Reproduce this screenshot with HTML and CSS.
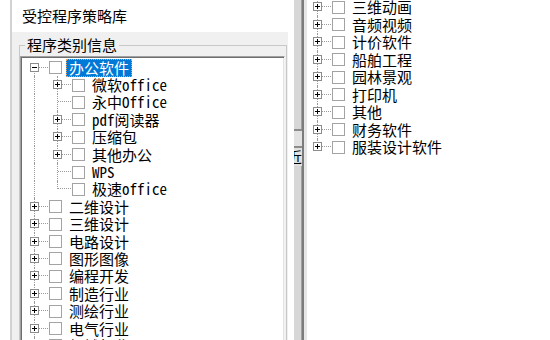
FILE: index.html
```html
<!DOCTYPE html>
<html lang="zh-CN">
<head>
<meta charset="utf-8">
<title>受控程序策略库</title>
<link rel="stylesheet" href="styles.css">
</head>
<body>
<div class="left">
  <div class="left-inner">
    <div class="title">受控程序策略库</div>
    <div class="group">
      <fieldset class="gbox">
        <legend>程序类别信息</legend>
        <div class="tree tree-left">
          <div class="row"><span class="exp first"><span class="box minus"></span></span><span class="chk"></span><span class="lbl sel">办公软件</span></div>
          <div class="row"><span class="ind v"></span><span class="exp"><span class="box plus"></span></span><span class="chk"></span><span class="lbl">微软office</span></div>
          <div class="row"><span class="ind v"></span><span class="exp"></span><span class="chk"></span><span class="lbl">永中Office</span></div>
          <div class="row"><span class="ind v"></span><span class="exp"><span class="box plus"></span></span><span class="chk"></span><span class="lbl">pdf阅读器</span></div>
          <div class="row"><span class="ind v"></span><span class="exp"><span class="box plus"></span></span><span class="chk"></span><span class="lbl">压缩包</span></div>
          <div class="row"><span class="ind v"></span><span class="exp"><span class="box plus"></span></span><span class="chk"></span><span class="lbl">其他办公</span></div>
          <div class="row"><span class="ind v"></span><span class="exp"></span><span class="chk"></span><span class="lbl">WPS</span></div>
          <div class="row"><span class="ind v"></span><span class="exp last"></span><span class="chk"></span><span class="lbl">极速office</span></div>
          <div class="row"><span class="exp"><span class="box plus"></span></span><span class="chk"></span><span class="lbl">二维设计</span></div>
          <div class="row"><span class="exp"><span class="box plus"></span></span><span class="chk"></span><span class="lbl">三维设计</span></div>
          <div class="row"><span class="exp"><span class="box plus"></span></span><span class="chk"></span><span class="lbl">电路设计</span></div>
          <div class="row"><span class="exp"><span class="box plus"></span></span><span class="chk"></span><span class="lbl">图形图像</span></div>
          <div class="row"><span class="exp"><span class="box plus"></span></span><span class="chk"></span><span class="lbl">编程开发</span></div>
          <div class="row"><span class="exp"><span class="box plus"></span></span><span class="chk"></span><span class="lbl">制造行业</span></div>
          <div class="row"><span class="exp"><span class="box plus"></span></span><span class="chk"></span><span class="lbl">测绘行业</span></div>
          <div class="row"><span class="exp"><span class="box plus"></span></span><span class="chk"></span><span class="lbl">电气行业</span></div>
          <div class="row"><span class="exp"><span class="box plus"></span></span><span class="chk"></span><span class="lbl">机械行业</span></div>
        </div>
      </fieldset>
    </div>
  </div>
</div>
<div class="splitter">
  <div class="split-btn"></div>
  <div class="split-text"><span>近</span></div>
</div>
<div class="right">
  <div class="tree tree-right">
    <div class="row"><span class="exp"><span class="box plus"></span></span><span class="chk"></span><span class="lbl">三维动画</span></div>
    <div class="row"><span class="exp"><span class="box plus"></span></span><span class="chk"></span><span class="lbl">音频视频</span></div>
    <div class="row"><span class="exp"><span class="box plus"></span></span><span class="chk"></span><span class="lbl">计价软件</span></div>
    <div class="row"><span class="exp"><span class="box plus"></span></span><span class="chk"></span><span class="lbl">船舶工程</span></div>
    <div class="row"><span class="exp"><span class="box plus"></span></span><span class="chk"></span><span class="lbl">园林景观</span></div>
    <div class="row"><span class="exp"><span class="box plus"></span></span><span class="chk"></span><span class="lbl">打印机</span></div>
    <div class="row"><span class="exp"><span class="box plus"></span></span><span class="chk"></span><span class="lbl">其他</span></div>
    <div class="row"><span class="exp"><span class="box plus"></span></span><span class="chk"></span><span class="lbl">财务软件</span></div>
    <div class="row"><span class="exp last"><span class="box plus"></span></span><span class="chk"></span><span class="lbl">服装设计软件</span></div>
  </div>
</div>
</body>
</html>
```

FILE: styles.css
```css
html, body {
  margin: 0;
  padding: 0;
}
body {
  width: 550px;
  height: 340px;
  overflow: hidden;
  display: flex;
  background: #ffffff;
  font-family: "Noto Sans Mono CJK SC", "Noto Sans CJK SC", sans-serif;
  font-size: 15px;
  color: #000;
}
.left {
  width: 288px;
  flex: none;
  padding-left: 10px;
  box-sizing: border-box;
  display: flex;
}
.left-inner {
  flex: 1;
  border-left: 2px solid #d2d2d2;
  display: flex;
  flex-direction: column;
  min-width: 0;
}
.title {
  height: 32px;
  box-sizing: border-box;
  padding: 7px 0 0 10px;
  line-height: 18px;
  background: #fff;
}
.group {
  flex: 1;
  background: #f0f0f0;
  padding: 5px 1px 0 7px;
  display: flex;
  min-height: 0;
}
.gbox {
  flex: 1;
  margin: 0;
  padding: 0;
  border: 1px solid #c8c8c8;
  border-bottom: none;
  min-width: 0;
  display: flex;
  flex-direction: column;
}
.gbox legend {
  margin-left: 5px;
  padding: 0 2px;
  line-height: 16px;
}
.tree-left {
  flex: 1;
  margin: 3px 1px 0 0;
  background: #fff;
  border-top: 1px solid #a0a0a0;
  border-left: 1px solid #a0a0a0;
  border-right: 1px solid #f4f4f4;
  box-shadow: inset 1px 1px 0 #6e6e6e, inset -1px 0 0 #e3e3e3;
  padding: 2px 0 0 1px;
  overflow: hidden;
}
.row {
  display: flex;
  align-items: center;
  height: 17.4px;
  white-space: nowrap;
}
.ind, .exp {
  position: relative;
  width: 23px;
  height: 100%;
  flex: none;
}
.ind.v::before,
.exp::before {
  content: "";
  position: absolute;
  left: 12px;
  top: 0;
  bottom: 0;
  border-left: 1px dotted #9a9a9a;
}
.exp.first::before { top: 50%; }
.exp.last::before { bottom: 50%; }
.exp::after {
  content: "";
  position: absolute;
  left: 13px;
  right: -3px;
  top: calc(50% - 1px);
  border-top: 1px dotted #9a9a9a;
}
.box {
  position: absolute;
  left: 8px;
  top: calc(50% - 5px);
  width: 9px;
  height: 9px;
  box-sizing: border-box;
  border: 1px solid #8c8c8c;
  background-color: #fff;
  z-index: 1;
}
.box.minus {
  background-image: linear-gradient(#000, #000);
  background-size: 5px 1px;
  background-position: center;
  background-repeat: no-repeat;
}
.box.plus {
  background-image: linear-gradient(#000, #000), linear-gradient(#000, #000);
  background-size: 5px 1px, 1px 5px;
  background-position: center, center;
  background-repeat: no-repeat;
}
.chk {
  flex: none;
  width: 13px;
  height: 13px;
  box-sizing: border-box;
  border: 1px solid #a3a3a3;
  background: #fff;
  margin-left: 4px;
}
.lbl {
  margin-left: 4px;
  padding: 0 2px;
  border: 1px solid transparent;
  line-height: 16px;
}
.lbl.sel {
  background: #0078d7;
  color: #fff;
  border: 1px dotted #f0a060;
}
.splitter {
  flex: none;
  width: 13px;
  margin-left: 6px;
  background: linear-gradient(to right, #d7d7d7 0 7px, #a0a0a0 7px 8px, #7c7c7c 8px 10px, #e6e6e6 10px 13px);
  display: flex;
  flex-direction: column;
}
.split-btn {
  margin-top: 129px;
  width: 8px;
  height: 19px;
  box-sizing: border-box;
  border-top: 2px solid #8c8c8c;
  border-bottom: 2px solid #8c8c8c;
  background: #e2e2e2;
}
.split-text {
  width: 8px;
  height: 18px;
  overflow: hidden;
  line-height: 18px;
  background: #e2e2e2;
}
.split-text span {
  display: block;
  margin-left: -7px;
}
.right {
  flex: 1;
  background: #fff;
  overflow: hidden;
}
.tree-right {
  margin: -1.5px 0 0 -2px;
}
.tree-right .row { height: 17.5px; }
```
